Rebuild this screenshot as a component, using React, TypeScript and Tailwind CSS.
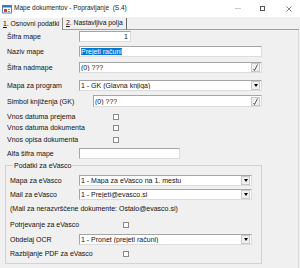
import React from 'react'

const Drop = () => (
  <div className="flex h-[9px] w-[9px] shrink-0 items-center justify-center border border-[#c8c8c8] bg-[#f0f0f0]">
    <svg width="4" height="3" viewBox="0 0 4 3">
      <path d="M0 0 H4 L2 3 Z" fill="#000" />
    </svg>
  </div>
)

const Pick = () => (
  <div className="flex h-[9px] w-[9px] shrink-0 items-center justify-center border border-[#c8c8c8] bg-[#f0f0f0]">
    <svg width="5" height="7" viewBox="0 0 5 7">
      <path d="M0.5 5 L1.5 6.5 L4.5 0.5" stroke="#333" strokeWidth="0.8" fill="none" />
    </svg>
  </div>
)

const Field = ({
  w,
  h = 'h-[11px]',
  right,
  btn,
  children,
}: {
  w: string
  h?: string
  right?: boolean
  btn?: React.ReactNode
  children?: React.ReactNode
}) => (
  <div
    className={`flex ${w} ${h} items-center border border-[#a5a5a5] border-r-[#dcdcdc] border-b-[#dcdcdc] bg-white pl-[1px] pr-[1px]`}
  >
    <div className={`flex-1 truncate leading-none ${right ? 'text-right pr-[1px]' : ''}`}>{children}</div>
    {btn}
  </div>
)

const Check = () => <div className="h-[6px] w-[6px] border border-[#8a8a8a] bg-white" />

const Row = ({
  mt,
  lw,
  label,
  h = 'h-[11px]',
  children,
}: {
  mt: string
  lw: string
  label: string
  h?: string
  children?: React.ReactNode
}) => (
  <div className={`flex ${h} ${mt} items-center`}>
    <div className={`${lw} shrink-0 leading-none`}>{label}</div>
    {children}
  </div>
)

export default function App() {
  return (
    <div className="flex h-[268px] w-[300px] flex-col overflow-hidden bg-[#f0f0f0] font-['Liberation_Sans',Arial,sans-serif] text-[7px] text-[#111]">
      {/* title bar */}
      <div className="flex h-[17px] shrink-0 items-center bg-white">
        <svg className="ml-[2px]" width="10" height="10" viewBox="0 0 10 10">
          <rect x="0.5" y="1.5" width="9" height="7.5" fill="#fff" stroke="#5b7fb5" />
          <rect x="0.5" y="1.5" width="9" height="2" fill="#3f6fc0" />
          <rect x="2" y="5" width="3" height="3" fill="#d83b2b" />
          <rect x="6" y="5" width="2" height="1" fill="#8a8a8a" />
          <rect x="6" y="7" width="2" height="1" fill="#8a8a8a" />
        </svg>
        <span className="ml-[2px] text-[6.5px] leading-none text-[#222]">Mape dokumentov - Popravljanje&nbsp;&nbsp;(S.4)</span>
        <div className="ml-auto flex items-center">
          <div className="mr-[19px] h-[1px] w-[6px] bg-[#c8c8c8]" />
          <div className="mr-[21px] h-[5px] w-[5px] border border-[#555]" />
          <svg className="mr-[8px]" width="6" height="6" viewBox="0 0 6 6">
            <path d="M0.5 0.5 L5.5 5.5 M5.5 0.5 L0.5 5.5" stroke="#666" strokeWidth="0.8" />
          </svg>
        </div>
      </div>

      {/* tabs */}
      <div className="flex h-[13px] shrink-0 text-[6.8px]">
        <div className="flex w-[63px] items-center whitespace-nowrap border-t border-r border-t-white border-r-[#8c8c8c] pl-[3px] leading-none">
          <span className="underline">1</span>. Osnovni podatki
        </div>
        <div className="mt-[1px] flex w-[64px] items-center whitespace-nowrap border-r border-b border-r-[#696969] border-b-[#a0a0a0] pl-[3px] leading-none">
          <span className="underline">2</span>. Nastavljiva polja
        </div>
        <div className="w-[172px] border-b border-[#a0a0a0]" />
      </div>

      {/* panel */}
      <div className="flex w-[299px] flex-1 flex-col border-r border-[#d9d9d9] pl-[7px]">
        <Row mt="mt-[1px]" lw="w-[72px]" label="Šifra mape">
          <Field w="w-[52px]" right>
            1
          </Field>
        </Row>
        <Row mt="mt-[4px]" lw="w-[72px]" label="Naziv mape">
          <Field w="w-[183px]">
            <span className="bg-[#0078d7] text-white">Prejeti računi</span>
          </Field>
        </Row>
        <Row mt="mt-[5px]" lw="w-[72px]" label="Šifra nadmape">
          <Field w="w-[183px]" btn={<Pick />}>
            (0) ???
          </Field>
        </Row>
        <Row mt="mt-[7px]" lw="w-[72px]" label="Mapa za program">
          <Field w="w-[183px]" btn={<Drop />}>
            1 - GK (Glavna knjiga)
          </Field>
        </Row>
        <Row mt="mt-[4px]" lw="w-[86px]" label="Simbol knjiženja (GK)" h="h-[12px]">
          <Field w="w-[169px]" h="h-[12px]" btn={<Pick />}>
            (0) ???
          </Field>
        </Row>
        <Row mt="mt-[4px]" lw="w-[106px]" label="Vnos datuma prejema">
          <Check />
        </Row>
        <Row mt="mt-[0px]" lw="w-[106px]" label="Vnos datuma dokumenta">
          <Check />
        </Row>
        <Row mt="mt-[1px]" lw="w-[106px]" label="Vnos opisa dokumenta">
          <Check />
        </Row>
        <Row mt="mt-[3px]" lw="w-[72px]" label="Alfa šifra mape">
          <Field w="w-[101px]" />
        </Row>

        <fieldset className="mt-[2px] ml-[-2px] w-[257px] border border-[#d2d2d2] pb-[4px] pl-[4px]">
          <legend className="ml-[3px] px-[1px] text-[7px] leading-[9px]">Podatki za eVasco</legend>
          <Row mt="mt-[5px]" lw="w-[69px]" label="Mapa za eVasco">
            <Field w="w-[173px]" btn={<Drop />}>
              1 - Mapa za eVasco na 1. mestu
            </Field>
          </Row>
          <Row mt="mt-[3px]" lw="w-[69px]" label="Mail za eVasco">
            <Field w="w-[173px]" btn={<Drop />}>
              1 - Prejeti@evasco.si
            </Field>
          </Row>
          <Row mt="mt-[3px]" lw="w-[240px]" label="(Mail za nerazvrščene dokumente: Ostalo@evasco.si)" />
          <Row mt="mt-[5px]" lw="w-[113px]" label="Potrjevanje za eVasco">
            <Check />
          </Row>
          <Row mt="mt-[4px]" lw="w-[69px]" label="Obdelaj OCR">
            <Field w="w-[173px]" btn={<Drop />}>
              1 - Pronet (prejeti računi)
            </Field>
          </Row>
          <Row mt="mt-[3px]" lw="w-[113px]" label="Razbijanje PDF za eVasco">
            <Check />
          </Row>
        </fieldset>
      </div>
    </div>
  )
}
